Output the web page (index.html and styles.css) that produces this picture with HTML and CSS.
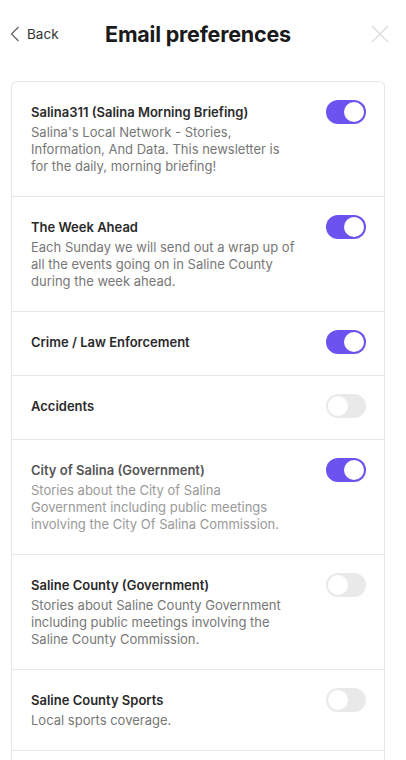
FILE: index.html
```html
<!DOCTYPE html>
<html lang="en">
<head>
  <meta charset="UTF-8">
  <title>Email preferences</title>
  <link rel="stylesheet" href="styles.css">
</head>
<body>

  <div class="header">
    <a href="#" class="back">
      <svg width="10" height="16" viewBox="0 0 10 16"><path d="M8.5 1 L1.5 8 L8.5 15" fill="none" stroke="#666" stroke-width="1.3"/></svg>
      <span>Back</span>
    </a>
    <h1>Email preferences</h1>
    <a href="#" class="close">
      <svg width="18" height="18" viewBox="0 0 18 18"><path d="M1 1 L17 17 M17 1 L1 17" fill="none" stroke="#dcdcdc" stroke-width="1.2"/></svg>
    </a>
  </div>

  <div class="card">
    <div class="row">
      <div class="text">
        <h4>Salina311 (Salina Morning Briefing)</h4>
        <p>Salina's Local Network - Stories, Information, And Data. This newsletter is for the daily, morning briefing!</p>
      </div>
      <span class="toggle on"></span>
    </div>
    <div class="row">
      <div class="text">
        <h4>The Week Ahead</h4>
        <p>Each Sunday we will send out a wrap up of all the events going on in Saline County during the week ahead.</p>
      </div>
      <span class="toggle on"></span>
    </div>
    <div class="row">
      <div class="text">
        <h4>Crime / Law Enforcement</h4>
      </div>
      <span class="toggle on"></span>
    </div>
    <div class="row">
      <div class="text">
        <h4>Accidents</h4>
      </div>
      <span class="toggle"></span>
    </div>
    <div class="row muted">
      <div class="text">
        <h4>City of Salina (Government)</h4>
        <p>Stories about the City of Salina Government including public meetings involving the City Of Salina Commission.</p>
      </div>
      <span class="toggle on"></span>
    </div>
    <div class="row">
      <div class="text">
        <h4>Saline County (Government)</h4>
        <p>Stories about Saline County Government including public meetings involving the Saline County Commission.</p>
      </div>
      <span class="toggle"></span>
    </div>
    <div class="row">
      <div class="text">
        <h4>Saline County Sports</h4>
        <p>Local sports coverage.</p>
      </div>
      <span class="toggle"></span>
    </div>
  </div>

</body>
</html>
```

FILE: styles.css
```css
body {
  background-color: #fff;
  font-family: Inter, "Noto Sans", sans-serif;
  color: #222;
  margin: 0;
  padding: 0 21px 0 11px;
}

.header {
  height: 81px;
  display: grid;
  grid-template-columns: 1fr auto 1fr;
  align-items: center;
  padding-bottom: 14px;
  box-sizing: border-box;
}

.back {
  display: flex;
  align-items: center;
  gap: 7px;
  margin-left: -1px;
  color: #333;
  font-size: 13.5px;
  text-decoration: none;
}

.header h1 {
  margin: 0;
  font-size: 21.5px;
  font-weight: 700;
  color: #1a1a1a;
  letter-spacing: -0.2px;
}

.close {
  justify-self: end;
  display: flex;
  margin-right: -4px;
}

.card {
  border: 1px solid #e6e6e6;
  border-radius: 6px 6px 0 0;
  border-bottom: none;
  padding-bottom: 20px;
}

.row {
  display: flex;
  align-items: flex-start;
  gap: 30px;
  padding: 18px 18px 21px 19px;
  border-bottom: 1px solid #e8e8e8;
}

.text {
  flex: 1;
}

.text h4 {
  margin: 0;
  font-size: 13px;
  font-weight: 600;
  line-height: 24px;
  color: #2a2a2a;
}

.text p {
  margin: 0;
  font-size: 13px;
  line-height: 17px;
  color: #777;
}

.muted .text h4 {
  color: #555;
}

.muted .text p {
  color: #999;
}

.toggle {
  flex: none;
  width: 40px;
  height: 24px;
  border-radius: 12px;
  background-color: #e9e9e9;
  position: relative;
}

.toggle::after {
  content: "";
  position: absolute;
  top: 2px;
  left: 2px;
  width: 20px;
  height: 20px;
  border-radius: 50%;
  background-color: #fff;
}

.toggle.on {
  background-color: #6c52ee;
}

.toggle.on::after {
  left: 18px;
}
```
